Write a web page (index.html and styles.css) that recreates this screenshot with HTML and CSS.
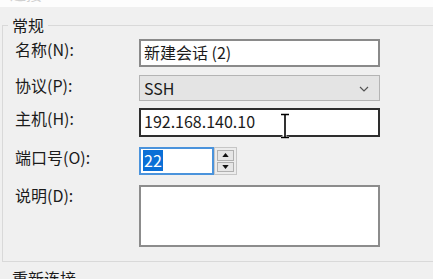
FILE: index.html
```
<!DOCTYPE html>
<html lang="zh-CN">

<head>
    <meta charset="UTF-8">
    <title>会话属性</title>
    <link rel="stylesheet" href="styles.css">
</head>

<body>

    <div class="topbar"><span>连接</span></div>

    <fieldset class="group">
        <legend>常规</legend>

        <div class="row">
            <div class="label">名称(N):</div>
            <div class="field text">新建会话 (2)</div>
        </div>

        <div class="row gap8">
            <div class="label">协议(P):</div>
            <div class="field select">
                SSH
                <svg class="chevron" width="10" height="6" viewBox="0 0 10 6">
                    <path d="M1 1 L5 5 L9 1" fill="none" stroke="#555" stroke-width="1.2" />
                </svg>
            </div>
        </div>

        <div class="row gap7">
            <div class="label">主机(H):</div>
            <div class="field text host">192.168.140.10</div>
        </div>

        <div class="row gap10">
            <div class="label">端口号(O):</div>
            <div class="port">
                <div class="field text focus"><span class="sel">22</span></div>
                <div class="spin">
                    <div class="spin-btn">
                        <svg width="7" height="4" viewBox="0 0 8 5"><path d="M0 5 L4 0 L8 5 Z" fill="#111" /></svg>
                    </div>
                    <div class="spin-btn">
                        <svg width="7" height="4" viewBox="0 0 8 5"><path d="M0 0 L4 5 L8 0 Z" fill="#111" /></svg>
                    </div>
                </div>
            </div>
        </div>

        <div class="row gap10">
            <div class="label">说明(D):</div>
            <div class="field memo"></div>
        </div>
    </fieldset>

    <div class="next">重新连接</div>

    <!-- mouse pointer over the host box -->
    <svg class="ibeam" width="12" height="26" viewBox="0 0 12 26">
        <path d="M2 1 H5 V25 H2 M7 1 H10 M7 25 H10 M6 1 V25" fill="none" stroke="#fff" stroke-width="3" />
        <path d="M2 1.5 H10 M2 24.5 H10 M6 1.5 V24.5" fill="none" stroke="#000" stroke-width="1.6" />
    </svg>

</body>

</html>
```

FILE: styles.css
```
html,
body {
    overflow: hidden;
}

body {
    margin: 0;
    width: 433px;
    height: 279px;
    background-color: #f0f0f0;
    font-family: "Noto Sans CJK SC", "Liberation Sans", sans-serif;
    font-size: 16px;
    color: #1b1b1b;
    position: relative;
}

.topbar {
    height: 7px;
    background-color: #fdfdfd;
    overflow: hidden;
}

.topbar span {
    display: block;
    margin: -17px 0 0 10px;
    line-height: 20px;
    color: #d0d0d0;
}

.group {
    margin: 8px 0 0 2px;
    padding: 4px 0 14px 12px;
    border: 1px solid #d9d9d9;
    width: 470px;
    min-width: 0;
}

.group legend {
    margin-left: -7px;
    padding: 0 4px;
    line-height: 20px;
}

.row {
    display: flex;
    align-items: flex-start;
}

.gap7 {
    margin-top: 7px;
}

.gap8 {
    margin-top: 8px;
}

.gap10 {
    margin-top: 10px;
}

.label {
    width: 124px;
    line-height: 20px;
}

.field {
    box-sizing: border-box;
    width: 241px;
    background-color: #fff;
}

.text {
    height: 28px;
    border: 2px solid #8a8a8a;
    padding-left: 3px;
    line-height: 23px;
}

.host {
    height: 29px;
    border-color: #2e2e2e;
}

.select {
    height: 26px;
    border: 1px solid #b4b4b4;
    background-color: #e4e4e4;
    padding: 0 10px 0 4px;
    line-height: 23px;
    display: flex;
    align-items: center;
    justify-content: space-between;
}

.chevron {
    margin-top: 2px;
}

.port {
    display: flex;
}

.focus {
    width: 75px;
    border-color: #4a93dc;
    padding-left: 2px;
}

.sel {
    display: inline-block;
    background-color: #0a6fd6;
    color: #fff;
    line-height: 21px;
    padding: 0 1px;
}

.spin {
    box-sizing: border-box;
    width: 23px;
    height: 28px;
    border: 1px solid #c6c6c6;
    padding: 2px 2px;
    display: flex;
    flex-direction: column;
    gap: 1px;
    background-color: #ececec;
}

.spin-btn {
    flex: 1;
    border: 1px solid #b0b0b0;
    background-color: #e6e6e6;
    display: flex;
    align-items: center;
    justify-content: center;
}

.memo {
    height: 62px;
    border: 2px solid #8c8c8c;
}

.next {
    margin: 6px 0 0 12px;
    line-height: 20px;
}

.ibeam {
    position: absolute;
    left: 279px;
    top: 113px;
}
```
